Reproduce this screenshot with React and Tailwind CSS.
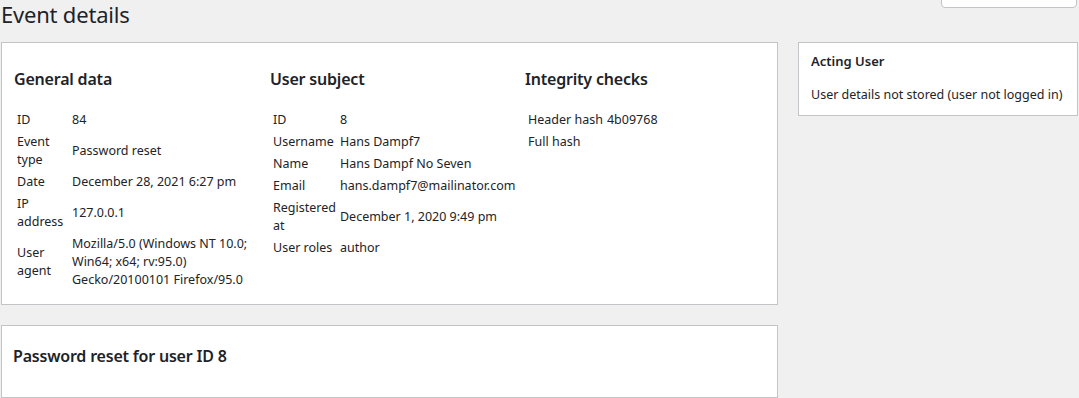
export default function App() {
  const general = [
    ['ID', '84'],
    ['Event type', 'Password reset'],
    ['Date', 'December 28, 2021 6:27 pm'],
    ['IP address', '127.0.0.1'],
    ['User agent', 'Mozilla/5.0 (Windows NT 10.0; Win64; x64; rv:95.0) Gecko/20100101 Firefox/95.0'],
  ];

  const subject = [
    ['ID', '8'],
    ['Username', 'Hans Dampf7'],
    ['Name', 'Hans Dampf No Seven'],
    ['Email', 'hans.dampf7@mailinator.com'],
    ['Registered at', 'December 1, 2020 9:49 pm'],
    ['User roles', 'author'],
  ];

  const integrity = [
    ['Header hash', '4b09768'],
    ['Full hash', ''],
  ];

  const DataTable = ({ rows, labelWidth, valueWidth }) => (
    <table className="mt-[18px] ml-[1px] border-collapse text-[12.5px] leading-[18px] table-fixed">
      <tbody>
        {rows.map(([label, value]) => (
          <tr key={label}>
            <td className={`py-[2px] pl-[2px] pr-[4px] align-middle ${labelWidth}`}>{label}</td>
            <td className={`py-[2px] px-0 align-middle ${valueWidth}`}>{value}</td>
          </tr>
        ))}
      </tbody>
    </table>
  );

  return (
    <div
      className="min-h-[398px] bg-[#f0f0f1] text-[#1d2327] overflow-hidden"
      style={{ fontFamily: '"Noto Sans", "Open Sans", "Liberation Sans", sans-serif' }}
    >
      <div className="flex items-start justify-between h-[42px]">
        <h1 className="text-[22px] leading-[28px] font-normal pl-[1px] tracking-[-0.2px]">Event details</h1>
        <div className="-mt-[20px] mr-[2px] w-[136px] h-[28px] bg-white border border-[#c3c4c7] rounded-b-[4px]" />
      </div>

      <div className="flex items-start pl-[1px] gap-[20px]">
        <div className="w-[777px] flex flex-col gap-[20px]">
          <div className="h-[263px] bg-white border border-[#c3c4c7] pl-[12px] pt-[24px] grid grid-cols-[256px_255px_1fr]">
            <div>
              <h2 className="text-[16px] leading-[24px] font-semibold tracking-[-0.2px]">General data</h2>
              <DataTable rows={general} labelWidth="w-[57px]" valueWidth="w-[186px]" />
            </div>
            <div>
              <h2 className="text-[16px] leading-[24px] font-semibold tracking-[-0.2px]">User subject</h2>
              <DataTable rows={subject} labelWidth="w-[67px]" valueWidth="w-[180px]" />
            </div>
            <div>
              <h2 className="text-[16px] leading-[24px] font-semibold tracking-[-0.2px]">Integrity checks</h2>
              <table className="mt-[18px] ml-[1px] border-collapse text-[12.5px] leading-[18px]">
                <tbody>
                  {integrity.map(([label, value]) => (
                    <tr key={label}>
                      <td className="py-[2px] pl-[2px] pr-[4px] whitespace-nowrap">{label}</td>
                      <td className="py-[2px]">{value}</td>
                    </tr>
                  ))}
                </tbody>
              </table>
            </div>
          </div>

          <div className="h-[73px] bg-white border border-[#c3c4c7] pl-[11px] pt-[18px]">
            <p className="text-[16px] leading-[24px] font-semibold tracking-[-0.2px]">Password reset for user ID 8</p>
          </div>
        </div>

        <div className="w-[280px] h-[74px] bg-white border border-[#c3c4c7] pl-[12px] pt-[8px]">
          <h3 className="text-[13px] leading-[20px] font-semibold">Acting User</h3>
          <p className="mt-[15px] text-[12.5px] leading-[18px]">User details not stored (user not logged in)</p>
        </div>
      </div>
    </div>
  );
}
